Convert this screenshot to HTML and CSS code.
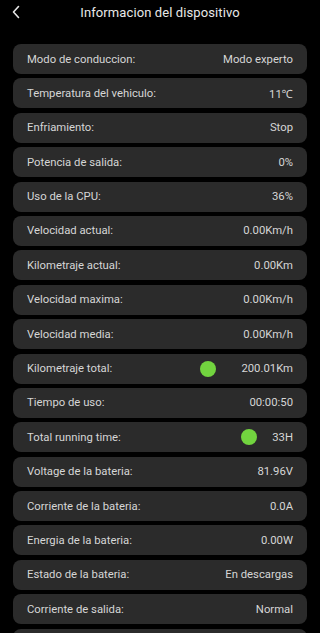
FILE: index.html
```html
<!DOCTYPE html>
<html lang="es">
<head>
<meta charset="utf-8">
<title>Informacion del dispositivo</title>
<link rel="stylesheet" href="styles.css">
</head>
<body>
<header class="topbar">
  <span class="back" aria-label="Atrás">
    <svg width="10" height="14" viewBox="0 0 10 14"><path d="M7.5 1.5 L2.5 7 L7.5 12.5" fill="none" stroke="#e6e6e6" stroke-width="1.6" stroke-linecap="round" stroke-linejoin="round"/></svg>
  </span>
  <h1 class="title">Informacion del dispositivo</h1>
</header>
<main class="list">
  <div class="row"><span class="label">Modo de conduccion:</span><span class="value">Modo experto</span></div>
  <div class="row"><span class="label">Temperatura del vehiculo:</span><span class="value">11℃</span></div>
  <div class="row"><span class="label">Enfriamiento:</span><span class="value">Stop</span></div>
  <div class="row"><span class="label">Potencia de salida:</span><span class="value">0%</span></div>
  <div class="row"><span class="label">Uso de la CPU:</span><span class="value">36%</span></div>
  <div class="row"><span class="label">Velocidad actual:</span><span class="value">0.00Km/h</span></div>
  <div class="row"><span class="label">Kilometraje actual:</span><span class="value">0.00Km</span></div>
  <div class="row"><span class="label">Velocidad maxima:</span><span class="value">0.00Km/h</span></div>
  <div class="row"><span class="label">Velocidad media:</span><span class="value">0.00Km/h</span></div>
  <div class="row"><span class="label">Kilometraje total:</span><span class="dot dot-wide"></span><span class="value">200.01Km</span></div>
  <div class="row"><span class="label">Tiempo de uso:</span><span class="value">00:00:50</span></div>
  <div class="row"><span class="label">Total running time:</span><span class="dot dot-narrow"></span><span class="value">33H</span></div>
  <div class="row"><span class="label">Voltage de la bateria:</span><span class="value">81.96V</span></div>
  <div class="row"><span class="label">Corriente de la bateria:</span><span class="value">0.0A</span></div>
  <div class="row"><span class="label">Energia de la bateria:</span><span class="value">0.00W</span></div>
  <div class="row"><span class="label">Estado de la bateria:</span><span class="value">En descargas</span></div>
  <div class="row"><span class="label">Corriente de salida:</span><span class="value">Normal</span></div>
  <div class="row row-empty"></div>
</main>
</body>
</html>
```

FILE: styles.css
```css
html, body {
  margin: 0;
  padding: 0;
  background: #000;
  height: 633px;
  overflow: hidden;
}
body {
  font-family: Roboto, "Noto Sans", "Liberation Sans", sans-serif;
  color: #d9d9d9;
}
.topbar {
  height: 25px;
  display: flex;
  align-items: center;
  justify-content: center;
  position: relative;
}
.back {
  position: absolute;
  left: 11px;
  top: 5px;
  width: 10px;
  height: 14px;
  display: flex;
}
.title {
  margin: 0;
  font-size: 13px;
  font-weight: 400;
  color: #e8e8e8;
  letter-spacing: 0.1px;
}
.list {
  display: flex;
  flex-direction: column;
  gap: 4.4px;
  padding: 19px 13px 0;
}
.row {
  height: 30px;
  flex: none;
  box-sizing: border-box;
  display: flex;
  align-items: center;
  padding: 0 14px;
  background: #2b2b2b;
  border-radius: 8px;
  font-size: 11.3px;
}
.label {
  flex: 1;
  color: #d6d6d6;
}
.value {
  color: #d6d6d6;
}
.dot {
  width: 16px;
  height: 16px;
  border-radius: 50%;
  background: #72d43f;
}
.dot-wide {
  margin-right: 25px;
}
.dot-narrow {
  margin-right: 15px;
}
```
